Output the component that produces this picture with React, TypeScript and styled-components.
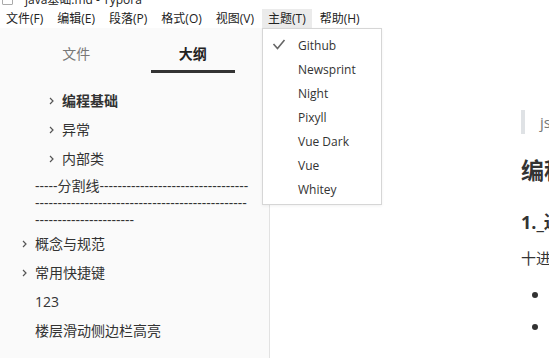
import styled, { createGlobalStyle } from 'styled-components';

const GlobalStyle = createGlobalStyle`
  html, body {
    margin: 0;
    padding: 0;
    background: #fff;
  }
  body {
    font-family: "Open Sans", "Noto Sans CJK SC", sans-serif;
    color: #333;
  }
`;

const Window = styled.div`
  width: 549px;
  height: 358px;
  overflow: hidden;
  position: relative;
  background: #fff;
  display: flex;
  flex-direction: column;
`;

const TitleBar = styled.div`
  height: 9px;
  overflow: hidden;
  display: flex;
  align-items: flex-end;
  gap: 10px;
  padding-left: 2px;
`;

const TitleIcon = styled.div`
  width: 9px;
  height: 12px;
  border: 1px solid #aaa;
  border-radius: 1px;
  margin-bottom: 4px;
`;

const TitleText = styled.span`
  font-size: 12px;
  line-height: 12px;
  color: #222;
  margin-bottom: 3px;
  margin-left: 2px;
`;

const MenuBar = styled.div`
  height: 19px;
  display: flex;
  gap: 2px;
`;

const MenuItem = styled.div<{ $active?: boolean }>`
  padding: 0 6px;
  font-size: 12px;
  line-height: 19px;
  color: #222;
  background: ${(p) => (p.$active ? '#ebebeb' : 'transparent')};
`;

const Body = styled.div`
  flex: 1;
  display: flex;
  min-height: 0;
`;

const Sidebar = styled.div`
  width: 269px;
  flex-shrink: 0;
  background: #fafafa;
  border-right: 1px solid #e2e2e2;
  display: flex;
  flex-direction: column;
`;

const Tabs = styled.div`
  display: grid;
  grid-template-columns: 1fr 1fr;
  padding: 0 18px;
`;

const Tab = styled.div<{ $active?: boolean }>`
  height: 45px;
  display: flex;
  flex-direction: column;
  align-items: center;
  justify-content: flex-end;
  font-size: 14px;
  font-weight: ${(p) => (p.$active ? 700 : 400)};
  color: ${(p) => (p.$active ? '#222' : '#777')};

  &::after {
    content: '';
    display: block;
    width: 84px;
    height: 3px;
    margin-top: 7px;
    background: ${(p) => (p.$active ? '#333' : 'transparent')};
  }
`;

const Outline = styled.div`
  padding: 13px 19px 0 0;
  display: flex;
  flex-direction: column;
`;

const OutlineRow = styled.div<{ $level: number; $bold?: boolean }>`
  display: flex;
  align-items: flex-start;
  padding: 6px 0 6px ${(p) => 35 + (p.$level - 1) * 27}px;
  font-size: 14px;
  line-height: 17px;
  color: #333;
  font-weight: ${(p) => (p.$bold ? 700 : 400)};
`;

const SeparatorRow = styled(OutlineRow)`
  padding-top: 4px;
  padding-bottom: 1px;
  word-break: break-all;
`;

const Chevron = styled.svg`
  position: absolute;
  left: -13px;
  top: 5px;
  width: 5px;
  height: 8px;
`;

const RowText = styled.span`
  position: relative;
`;

const Editor = styled.div`
  flex: 1;
  min-width: 0;
  overflow: hidden;
  padding: 82px 0 0 251px;
  white-space: nowrap;
`;

const Quote = styled.div`
  border-left: 4px solid #dfe2e5;
  padding-left: 15px;
  height: 24px;
  line-height: 24px;
  font-size: 15px;
  color: #777;
`;

const H1 = styled.div`
  margin-top: 22px;
  font-size: 23px;
  line-height: 28px;
  font-weight: 700;
  color: #333;
`;

const H2 = styled.div`
  margin-top: 27px;
  font-size: 18px;
  line-height: 22px;
  font-weight: 700;
  color: #333;
`;

const Para = styled.div`
  margin-top: 13px;
  font-size: 15px;
  line-height: 24px;
  color: #333;
`;

const List = styled.div`
  margin-top: 9px;
  display: flex;
  flex-direction: column;
`;

const ListItem = styled.div`
  height: 32px;
  display: flex;
  align-items: center;
  font-size: 15px;

  &::before {
    content: '';
    width: 6px;
    height: 6px;
    border-radius: 50%;
    background: #333;
    margin: 0 20px 0 11px;
    flex-shrink: 0;
  }
`;

const Dropdown = styled.div`
  position: absolute;
  left: 262px;
  top: 28px;
  width: 118px;
  padding: 4px 0 3px;
  background: #fff;
  border: 1px solid #d6d6d6;
  box-shadow: 0 1px 3px rgba(0, 0, 0, 0.06);
`;

const DropdownItem = styled.div`
  height: 24px;
  display: flex;
  align-items: center;
  padding-left: 35px;
  position: relative;
  font-size: 12px;
  color: #333;
`;

const Check = styled.svg`
  position: absolute;
  left: 9px;
  top: 6px;
  width: 14px;
  height: 11px;
`;

const themes = ['Github', 'Newsprint', 'Night', 'Pixyll', 'Vue Dark', 'Vue', 'Whitey'];
const menus = ['文件(F)', '编辑(E)', '段落(P)', '格式(O)', '视图(V)', '主题(T)', '帮助(H)'];

const ChevronIcon = () => (
  <Chevron viewBox="0 0 5 8">
    <path d="M1 1 L4 4 L1 7" fill="none" stroke="#555" strokeWidth="1.2" />
  </Chevron>
);

const App = () => {
  return (
    <Window>
      <GlobalStyle />
      <TitleBar>
        <TitleIcon />
        <TitleText>java基础.md - Typora</TitleText>
      </TitleBar>
      <MenuBar>
        {menus.map((m) => (
          <MenuItem key={m} $active={m === '主题(T)'}>
            {m}
          </MenuItem>
        ))}
      </MenuBar>
      <Body>
        <Sidebar>
          <Tabs>
            <Tab>文件</Tab>
            <Tab $active>大纲</Tab>
          </Tabs>
          <Outline>
            <OutlineRow $level={2} $bold>
              <RowText>
                <ChevronIcon />
                编程基础
              </RowText>
            </OutlineRow>
            <OutlineRow $level={2}>
              <RowText>
                <ChevronIcon />
                异常
              </RowText>
            </OutlineRow>
            <OutlineRow $level={2}>
              <RowText>
                <ChevronIcon />
                内部类
              </RowText>
            </OutlineRow>
            <SeparatorRow $level={1}>
              <RowText>{'-----分割线' + '-'.repeat(102)}</RowText>
            </SeparatorRow>
            <OutlineRow $level={1}>
              <RowText>
                <ChevronIcon />
                概念与规范
              </RowText>
            </OutlineRow>
            <OutlineRow $level={1}>
              <RowText>
                <ChevronIcon />
                常用快捷键
              </RowText>
            </OutlineRow>
            <OutlineRow $level={1}>
              <RowText>123</RowText>
            </OutlineRow>
            <OutlineRow $level={1}>
              <RowText>楼层滑动侧边栏高亮</RowText>
            </OutlineRow>
          </Outline>
        </Sidebar>
        <Editor>
          <Quote>js与java的区别</Quote>
          <H1>编程基础</H1>
          <H2>1._进制</H2>
          <Para>十进制转二进制</Para>
          <List>
            <ListItem>除二取余</ListItem>
            <ListItem>倒序排列</ListItem>
          </List>
        </Editor>
      </Body>
      <Dropdown>
        {themes.map((t, i) => (
          <DropdownItem key={t}>
            {i === 0 && (
              <Check viewBox="0 0 14 11">
                <path d="M1.5 5 L5.5 9.5 L12.5 1" fill="none" stroke="#666" strokeWidth="1.6" />
              </Check>
            )}
            {t}
          </DropdownItem>
        ))}
      </Dropdown>
    </Window>
  );
};

export default App;
